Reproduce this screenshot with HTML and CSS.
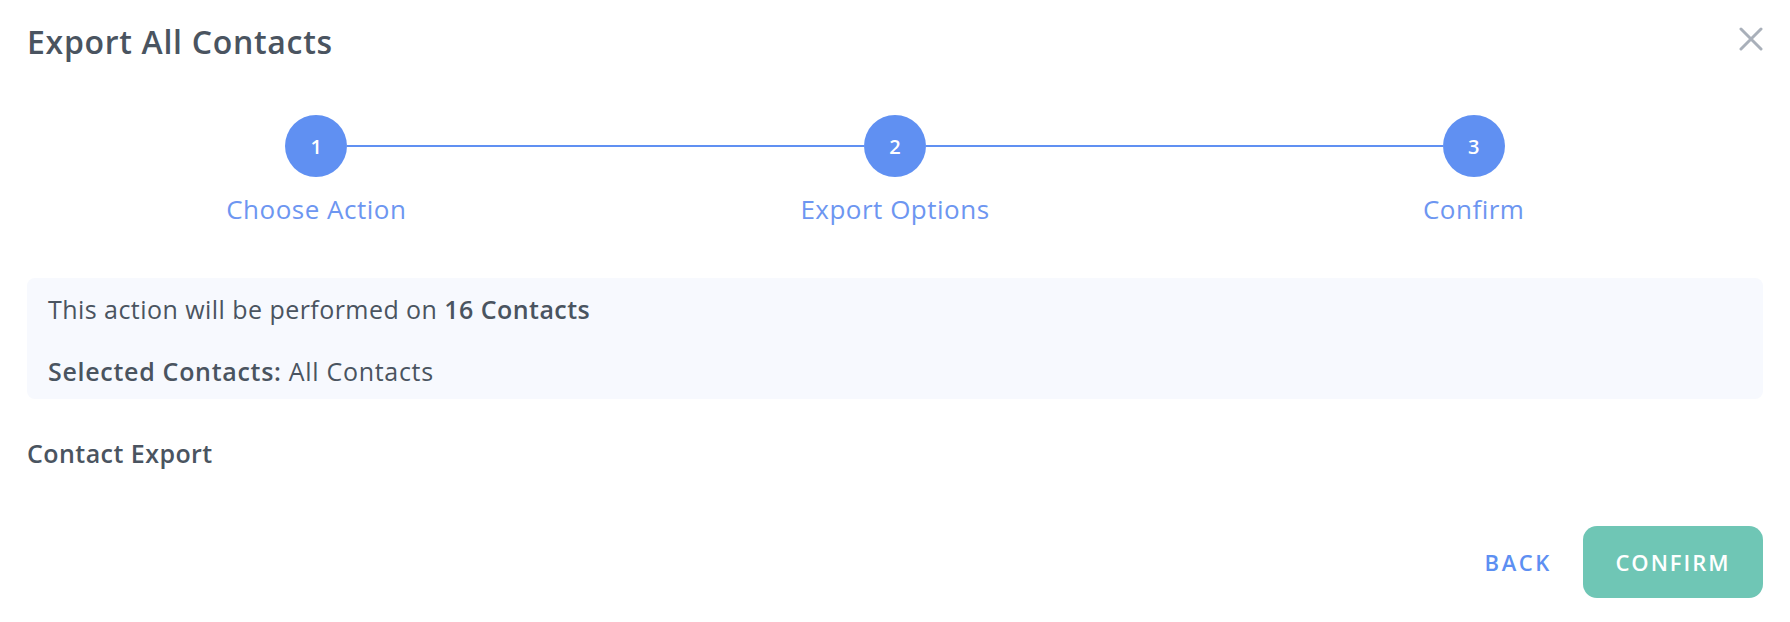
FILE: index.html
```html
<!DOCTYPE html>
<html>
<head>
<meta charset="utf-8">
<link rel="stylesheet" href="styles.css">
</head>
<body>
<div class="modal">
  <div class="header">
    <h1 class="title">Export All Contacts</h1>
    <button class="close" aria-label="Close">
      <svg width="24" height="24" viewBox="0 0 24 24"><path d="M2 2 L22 22 M22 2 L2 22" stroke="#a9b0ba" stroke-width="3" stroke-linecap="round" fill="none"/></svg>
    </button>
  </div>
  <div class="stepper">
    <div class="step">
      <div class="track"><span class="line hidden"></span><span class="circle">1</span><span class="line"></span></div>
      <div class="label">Choose Action</div>
    </div>
    <div class="step">
      <div class="track"><span class="line"></span><span class="circle">2</span><span class="line"></span></div>
      <div class="label">Export Options</div>
    </div>
    <div class="step">
      <div class="track"><span class="line"></span><span class="circle">3</span><span class="line hidden"></span></div>
      <div class="label">Confirm</div>
    </div>
  </div>
  <div class="summary">
    <p>This action will be performed on <b>16 Contacts</b></p>
    <p class="selected"><b>Selected Contacts:</b> All Contacts</p>
  </div>
  <div class="section-title">Contact Export</div>
  <div class="footer">
    <button class="btn-back">BACK</button>
    <button class="btn-confirm">CONFIRM</button>
  </div>
</div>
</body>
</html>
```
FILE: styles.css
```css
* { box-sizing: border-box; }
html, body { margin: 0; padding: 0; background: #ffffff; }
body { font-family: "Open Sans", "Liberation Sans", sans-serif; color: #4a5460; }
.modal { width: 1790px; padding: 0 27px; }
.header { display: flex; justify-content: space-between; align-items: flex-start; padding-top: 23px; height: 115px; }
.title { margin: 0; font-size: 32px; font-weight: 600; line-height: 38px; color: #4a5460; letter-spacing: 0.7px; }
.close { background: none; border: 0; padding: 0; width: 24px; height: 24px; margin-top: 4px; cursor: pointer; }
.close svg { display: block; }
.stepper { display: grid; grid-template-columns: repeat(3, 1fr); }
.step { display: flex; flex-direction: column; align-items: center; }
.track { display: flex; align-items: center; width: 100%; height: 62px; }
.line { flex: 1; height: 2px; background: #6090f2; }
.line.hidden { visibility: hidden; }
.circle { width: 62px; height: 62px; border-radius: 50%; background: #6090f2; color: #fff; display: flex; align-items: center; justify-content: center; font-size: 20px; font-weight: 600; }
.label { margin-top: 17px; font-size: 26px; line-height: 30px; color: #6d96f1; letter-spacing: 0.5px; }
.summary { margin-top: 54px; background: #f7f9fe; border-radius: 8px; padding: 15px 21px 14px; height: 121px; }
.summary p { margin: 0; font-size: 25px; line-height: 32px; color: #4a5460; letter-spacing: 0.45px; }
.summary p + p { margin-top: 30px; }
.summary p.selected { letter-spacing: 0.7px; }
.summary b { font-weight: 600; }
.section-title { margin-top: 38px; font-size: 25px; line-height: 32px; font-weight: 600; color: #4a5460; letter-spacing: 0.45px; }
.footer { display: flex; justify-content: flex-end; align-items: center; gap: 31px; margin-top: 57px; }
.btn-back { background: none; border: 0; padding: 0; font-family: inherit; font-size: 22px; font-weight: 600; letter-spacing: 2.6px; color: #5d8ff2; cursor: pointer; }
.btn-confirm { width: 180px; height: 72px; border: 0; border-radius: 14px; background: #6fc6b5; color: #fff; font-family: inherit; font-size: 22px; font-weight: 600; letter-spacing: 2px; cursor: pointer; }
```
